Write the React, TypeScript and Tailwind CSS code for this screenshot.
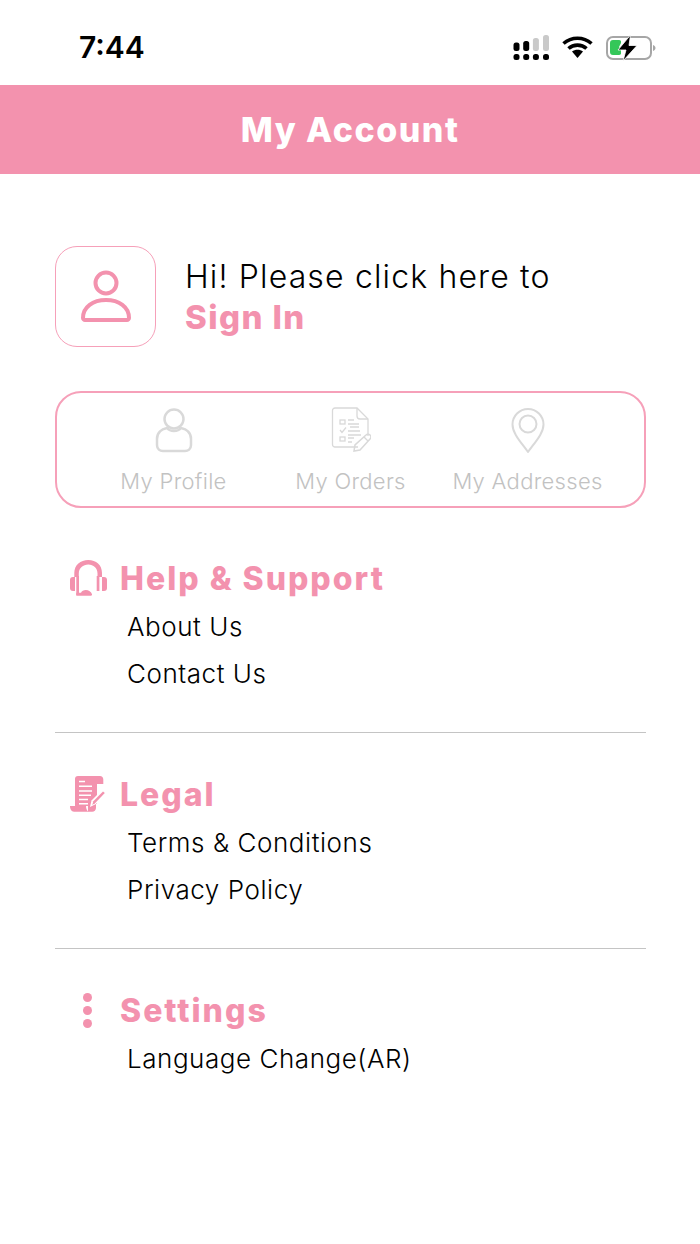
import React from "react";

const font = { fontFamily: '"Inter", "Liberation Sans", sans-serif' };

function StatusIcons() {
  return (
    <div className="flex items-center">
      <svg width="36" height="26" viewBox="0 0 36 26" className="mr-[13px]">
        <rect x="0.500" y="7.500" width="6" height="8.500" rx="2.500" fill="#000" />
        <rect x="10.200" y="6" width="6" height="10" rx="2.500" fill="#000" />
        <rect x="19.900" y="3" width="6" height="13" rx="2.500" fill="#c9c9c9" />
        <rect x="30" y="0" width="6" height="16" rx="2.500" fill="#c9c9c9" />
        <rect x="0.500" y="19" width="6" height="6" rx="2.500" fill="#000" />
        <rect x="10.200" y="19" width="6" height="6" rx="2.500" fill="#000" />
        <rect x="19.900" y="19" width="6" height="6" rx="2.500" fill="#000" />
        <rect x="30" y="19" width="6" height="6" rx="2.500" fill="#000" />
      </svg>
      <svg width="31" height="23" viewBox="0 0 31 23" className="mr-[13px]">
        <path d="M1.500 7.500C9.500.5 21.500.5 29.500 7.500" fill="none" stroke="#000" strokeWidth="3.600" />
        <path d="M6.500 12.500C11.500 8 19.500 8 24.500 12.500" fill="none" stroke="#000" strokeWidth="3.600" />
        <path d="M10 15.500C13 13 18 13 21 15.500L15.500 22Z" fill="#000" />
      </svg>
      <svg width="50" height="26" viewBox="0 0 50 26">
        <rect x="1" y="2" width="44" height="22" rx="6" fill="none" stroke="#a6a6a6" strokeWidth="2" />
        <path d="M47 10v6c1.500-.5 2.500-1.700 2.500-3s-1-2.500-2.500-3Z" fill="#a6a6a6" />
        <path d="M4 8a3 3 0 0 1 3-3h6a3 3 0 0 1 2 1v2l-2 4 2 3v4a3 3 0 0 1-2 .9H7a3 3 0 0 1-3-3Z" fill="#34c759" />
        <path d="M24.500 0 12 15H20L17 26 31 10.500H23Z" fill="#000" stroke="#fff" strokeWidth="0.800" />
      </svg>
    </div>
  );
}

function PersonPink() {
  return (
    <svg width="52" height="54" viewBox="0 0 52 54" fill="none" stroke="#f392ae" strokeWidth="4">
      <circle cx="26" cy="13" r="10.500" />
      <path d="M3 48c0-11 10-18 23-18s23 7 23 18c0 1-1 2-2 2H5c-1 0-2-1-2-2Z" strokeLinejoin="round" />
    </svg>
  );
}

function PersonGrey() {
  return (
    <svg width="38" height="46" viewBox="0 0 38 46" fill="none" stroke="#d9d9d9" strokeWidth="2.500">
      <circle cx="19" cy="12" r="9.500" />
      <path d="M12 21C6 22 2 26 2 32v6c0 4 3 6 6 6h22c3 0 6-2 6-6v-6c0-6-4-10-10-11-2 2.500-4.500 3-7 3s-5-.5-7-3Z" strokeLinejoin="round" />
    </svg>
  );
}

function OrdersGrey() {
  return (
    <svg width="40" height="46" viewBox="0 0 40 46" fill="none" stroke="#d9d9d9" strokeWidth="1.300">
      <path d="M27 40H4a2.500 2.500 0 0 1-2.500-2.500V3.500A2.500 2.500 0 0 1 4 1h22l11 11v17" />
      <path d="M26 1v8a3 3 0 0 0 3 3h8" />
      <rect x="9" y="13" width="5" height="4" />
      <rect x="9" y="30" width="5" height="4" />
      <path d="M9 23l2 2.500 4-5M17 13h6M17 17h11M19 20h9M17 24h12M17 28h13M17 31h6M17 35h4" />
      <path d="M23 44l1-6 11-10c1-1 3-1 4 0s1 3 0 4L29 43Z" strokeWidth="1.500" />
      <path d="M33 30l4 4" />
    </svg>
  );
}

function PinGrey() {
  return (
    <svg width="36" height="46" viewBox="0 0 36 46" fill="none" stroke="#d9d9d9" strokeWidth="2">
      <path d="M18 45C10 34 2.500 26 2.500 17.500a15.500 15.500 0 0 1 31 0C33.500 26 26 34 18 45Z" strokeLinejoin="round" />
      <circle cx="18" cy="17" r="8.500" />
    </svg>
  );
}

function HeadsetIcon() {
  return (
    <svg width="37" height="37" viewBox="0 0 37 37" fill="#f392ae">
      <path d="M4.300 17v-4C4.300 5 10.500 0 18.300 0S32 5 32 13v4h-4.500v-3.500c0-5.500-4-9-9.200-9S8.800 8 8.800 13.500V17Z" />
      <path d="M3 17h2v14H3a3 3 0 0 1-3-3V20a3 3 0 0 1 3-3Z" />
      <path d="M34 17h-2v14h2a3 3 0 0 0 3-3V20a3 3 0 0 0-3-3Z" />
      <rect x="6.300" y="16" width="2.700" height="19" />
      <rect x="26.700" y="16" width="2.700" height="15" />
      <path d="M6.300 32.800h4.700c.8-1.800 2.500-2.800 4.800-2.800 3 0 5.400 1.700 6.200 4.300.2.800-.3 1.400-1 1.400H6.300Z" />
    </svg>
  );
}

function LegalIcon() {
  return (
    <svg width="37" height="37" viewBox="0 0 37 37">
      <path d="M5 3a3 3 0 0 1 3-3h22c2 0 3.300 1.500 3.300 3.500V8H27v20l-1 0v4a4 4 0 0 1-4 3.700H18V30H5Z" fill="#f392ae" />
      <path d="M0 30h16c0 2.500.8 4.500 2.500 5.700H4c-2.500 0-4-2.500-4-5.700Z" fill="#f392ae" />
      <path d="M9 5.500h6M9 10.300h13M9 15h13M9 19.300h12M9 23.500h9M9 27.700h9" stroke="#fff" strokeWidth="1.400" />
      <path d="M20 31l1.500-6.500L33 13l4 3.500L26 28Z" fill="#fff" />
      <path d="M22.300 29l1-3.800L33 15.500l1.800 1.500L25 27.300Z" fill="#f392ae" />
    </svg>
  );
}

function DotsIcon() {
  return (
    <div className="flex h-[37px] w-[35px] flex-col items-center justify-between py-[1px]">
      <span className="h-[9px] w-[9px] rounded-full bg-[#f392ae]" />
      <span className="h-[9px] w-[9px] rounded-full bg-[#f392ae]" />
      <span className="h-[9px] w-[9px] rounded-full bg-[#f392ae]" />
    </div>
  );
}

function Section({ icon, title, items, gap }: { icon: React.ReactNode; title: string; items: string[]; gap: string }) {
  return (
    <div className="flex flex-col">
      <div className={`flex h-[37px] items-center pl-[15px] ${gap}`}>
        {icon}
        <span className="text-[32px] font-extrabold leading-none tracking-[2px] text-[#f392ae]">{title}</span>
      </div>
      <div className="flex flex-col gap-[13.500px] pl-[72px] pt-[13px]">
        {items.map((t) => (
          <div key={t} className="h-[33px] text-[26px] font-[350] leading-[33px] tracking-[0.55px] text-black">
            {t}
          </div>
        ))}
      </div>
    </div>
  );
}

function Tile({ icon, label }: { icon: React.ReactNode; label: string }) {
  return (
    <div className="flex w-[177px] flex-col items-center">
      <div className="flex h-[46px] items-center">{icon}</div>
      <div className="pt-[14px] text-[22px] font-[350] leading-[28px] tracking-[0.3px] text-[#c2c2c2]">{label}</div>
    </div>
  );
}

export default function App() {
  return (
    <div className="flex h-[1244px] w-[700px] flex-col bg-white" style={font}>
      <div className="flex h-[85px] items-center justify-between pl-[79px] pr-[44px] pt-[10px]">
        <span className="text-[30px] font-semibold text-black">7:44</span>
        <StatusIcons />
      </div>
      <div className="flex h-[89px] items-center justify-center bg-[#f392ae]">
        <span className="text-[34px] font-extrabold tracking-[1.5px] text-white">My Account</span>
      </div>
      <div className="flex flex-col pl-[55px] pr-[54px] pt-[72px]">
        <div className="flex items-center gap-[29px]">
          <div className="flex h-[101px] w-[101px] items-center justify-center rounded-[22px] border-[1.5px] border-[#f6a0b9]">
            <PersonPink />
          </div>
          <div className="flex flex-col">
            <span className="text-[32px] font-[350] leading-[40px] tracking-[1.15px] text-black">Hi! Please click here to</span>
            <span className="text-[33px] font-extrabold leading-[40px] tracking-[1.4px] text-[#f392ae]">Sign In</span>
          </div>
        </div>
        <div className="mt-[44px] flex h-[117px] items-start rounded-[26px] border-2 border-[#f6a0b9] pl-[28px] pr-[28px] pt-[14px]">
          <Tile icon={<PersonGrey />} label="My Profile" />
          <Tile icon={<OrdersGrey />} label="My Orders" />
          <Tile icon={<PinGrey />} label="My Addresses" />
        </div>
        <div className="mt-[52px]">
          <Section icon={<HeadsetIcon />} title="Help & Support" gap="gap-[13px]" items={["About Us", "Contact Us"]} />
        </div>
        <div className="mt-[42.500px] h-px bg-[#c4c4c4]" />
        <div className="mt-[43px]">
          <Section icon={<LegalIcon />} title="Legal" gap="gap-[13px]" items={["Terms & Conditions", "Privacy Policy"]} />
        </div>
        <div className="mt-[42.500px] h-px bg-[#c4c4c4]" />
        <div className="mt-[43px]">
          <Section icon={<DotsIcon />} title="Settings" gap="gap-[15px]" items={["Language Change(AR)"]} />
        </div>
      </div>
    </div>
  );
}
